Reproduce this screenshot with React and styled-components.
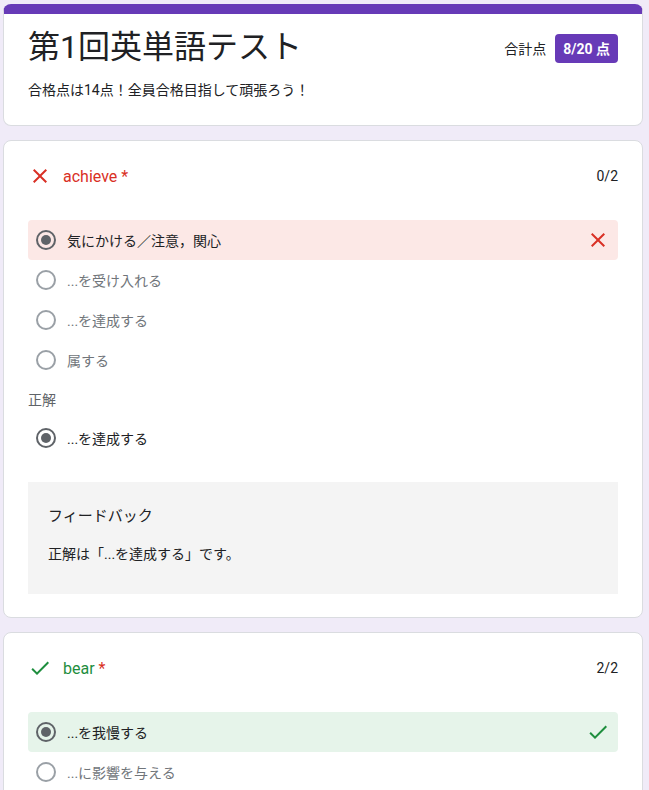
import React from "react";
import styled, { createGlobalStyle } from "styled-components";

const colors = {
  page: "#f0ebf8",
  purple: "#673ab7",
  border: "#dadce0",
  text: "#202124",
  grey: "#5f6368",
  lightGrey: "#70757a",
  radioGrey: "#9aa0a6",
  red: "#d93025",
  redBg: "#fce8e6",
  green: "#1e8e3e",
  greenBg: "#e6f4ea",
  feedback: "#f4f4f4",
};

const GlobalStyle = createGlobalStyle`
  body {
    margin: 0;
    background: ${colors.page};
    font-family: "Roboto", "Noto Sans CJK JP", sans-serif;
    color: ${colors.text};
  }
`;

const Page = styled.div`
  display: flex;
  flex-direction: column;
  gap: 14px;
  padding: 4px 0 24px 3px;
`;

const Card = styled.div`
  width: 640px;
  box-sizing: border-box;
  background: #fff;
  border: 1px solid ${colors.border};
  border-radius: 8px;
  padding: 23px 24px;
`;

const TitleCard = styled(Card)`
  border-top: 10px solid ${colors.purple};
  padding: 13px 24px 25px;
`;

const TitleRow = styled.div`
  display: flex;
  align-items: center;
  justify-content: space-between;
`;

const Title = styled.h1`
  margin: 0;
  font-size: 32px;
  font-weight: 400;
  line-height: 40px;
`;

const Score = styled.div`
  display: flex;
  align-items: center;
  gap: 9px;
  font-size: 14px;
  margin-top: 2px;
`;

const Badge = styled.span`
  display: inline-flex;
  align-items: center;
  height: 29px;
  padding: 0 8px;
  border-radius: 4px;
  background: ${colors.purple};
  color: #fff;
  font-weight: 700;
`;

const Description = styled.p`
  margin: 13px 0 0;
  font-size: 14px;
  line-height: 20px;
`;

const QuestionHeader = styled.div`
  display: flex;
  align-items: center;
  height: 24px;
  margin-bottom: 32px;
`;

const QuestionTitle = styled.span`
  flex: 1;
  margin-left: 11px;
  font-size: 16px;
  color: ${(p) => (p.$correct ? colors.green : colors.red)};
`;

const Required = styled.span`
  color: ${colors.red};
`;

const Points = styled.span`
  font-size: 14px;
`;

const Option = styled.div`
  display: flex;
  align-items: center;
  height: 40px;
  padding: 0 8px;
  border-radius: 4px;
  background: ${(p) =>
    p.$state === "wrong" ? colors.redBg : p.$state === "right" ? colors.greenBg : "transparent"};
`;

const Radio = styled.span`
  position: relative;
  width: 20px;
  height: 20px;
  box-sizing: border-box;
  border-radius: 50%;
  border: 2px solid ${(p) => (p.$checked ? colors.grey : colors.radioGrey)};
  flex-shrink: 0;
  &::after {
    content: "";
    display: ${(p) => (p.$checked ? "block" : "none")};
    position: absolute;
    left: 3px;
    top: 3px;
    width: 10px;
    height: 10px;
    border-radius: 50%;
    background: ${colors.grey};
  }
`;

const OptionText = styled.span`
  flex: 1;
  margin-left: 11px;
  font-size: 14px;
  color: ${(p) => (p.$dim ? colors.lightGrey : colors.text)};
`;

const Label = styled.div`
  margin: 10px 0 8px;
  font-size: 14px;
  line-height: 20px;
  color: ${colors.grey};
`;

const Feedback = styled.div`
  margin-top: 24px;
  padding: 24px 20px 30px;
  background: ${colors.feedback};
`;

const FeedbackTitle = styled.div`
  font-size: 15px;
  line-height: 20px;
`;

const FeedbackBody = styled.div`
  margin-top: 18px;
  font-size: 14px;
  line-height: 20px;
`;

const CloseIcon = ({ color = colors.red }) => (
  <svg width="24" height="24" viewBox="0 0 24 24" fill={color}>
    <path d="M19 6.41L17.59 5 12 10.59 6.41 5 5 6.41 10.59 12 5 17.59 6.41 19 12 13.41 17.59 19 19 17.59 13.41 12z" />
  </svg>
);

const CheckIcon = ({ color = colors.green }) => (
  <svg width="24" height="24" viewBox="0 0 24 24" fill={color}>
    <path d="M9 16.17L4.83 12l-1.42 1.41L9 19 21 7l-1.41-1.41z" />
  </svg>
);

const questions = [
  {
    word: "achieve",
    correct: false,
    points: "0/2",
    options: ["気にかける／注意，関心", "...を受け入れる", "...を達成する", "属する"],
    chosen: 0,
    answer: "...を達成する",
    feedback: "正解は「...を達成する」です。",
  },
  {
    word: "bear",
    correct: true,
    points: "2/2",
    options: ["...を我慢する", "...に影響を与える"],
    chosen: 0,
  },
];

const App = () => {
  return (
    <>
      <GlobalStyle />
      <Page>
        <TitleCard>
          <TitleRow>
            <Title>第1回英単語テスト</Title>
            <Score>
              合計点
              <Badge>8/20 点</Badge>
            </Score>
          </TitleRow>
          <Description>合格点は14点！全員合格目指して頑張ろう！</Description>
        </TitleCard>
        {questions.map((q) => (
          <Card key={q.word}>
            <QuestionHeader>
              {q.correct ? <CheckIcon /> : <CloseIcon />}
              <QuestionTitle $correct={q.correct}>
                {q.word} <Required>*</Required>
              </QuestionTitle>
              <Points>{q.points}</Points>
            </QuestionHeader>
            {q.options.map((opt, i) => {
              const picked = i === q.chosen;
              return (
                <Option key={opt} $state={picked ? (q.correct ? "right" : "wrong") : null}>
                  <Radio $checked={picked} />
                  <OptionText $dim={!picked}>{opt}</OptionText>
                  {picked && (q.correct ? <CheckIcon /> : <CloseIcon />)}
                </Option>
              );
            })}
            {q.answer && (
              <>
                <Label>正解</Label>
                <Option>
                  <Radio $checked />
                  <OptionText>{q.answer}</OptionText>
                </Option>
              </>
            )}
            {q.feedback && (
              <Feedback>
                <FeedbackTitle>フィードバック</FeedbackTitle>
                <FeedbackBody>{q.feedback}</FeedbackBody>
              </Feedback>
            )}
          </Card>
        ))}
      </Page>
    </>
  );
};

export default App;
